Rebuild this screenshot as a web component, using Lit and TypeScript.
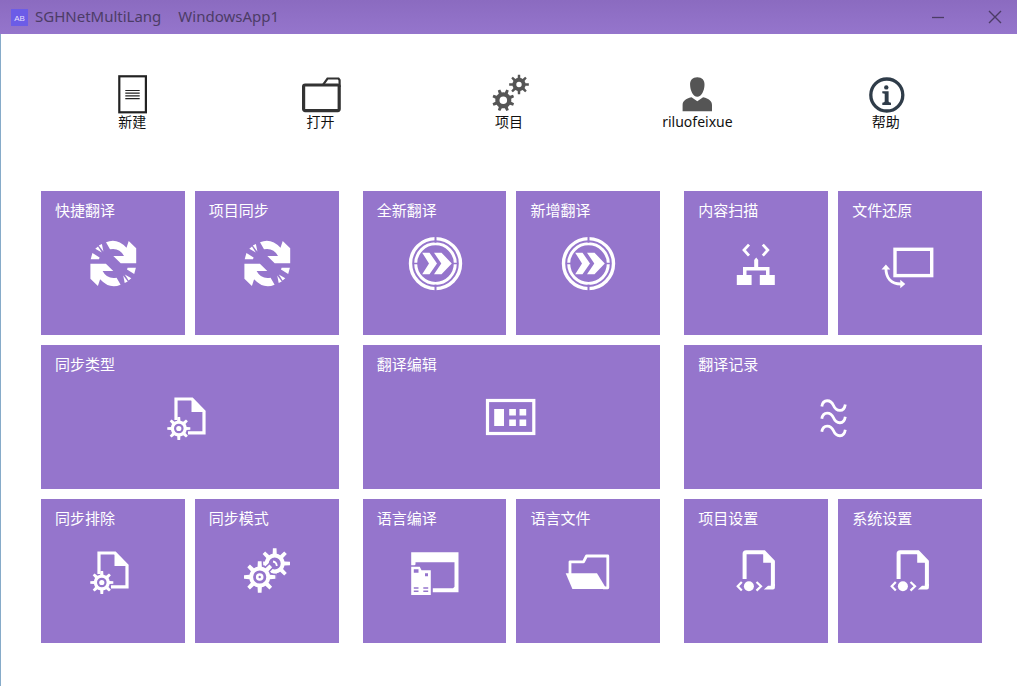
import { LitElement, html, svg, css, type SVGTemplateResult } from "lit";
import { customElement, property } from "lit/decorators.js";
import { classMap } from "lit/directives/class-map.js";

/** Outline of a cog with `n` teeth, centred on (cx, cy). */
function cog(cx: number, cy: number, outer: number, body: number, n = 8, start = 0): string {
  const step = (Math.PI * 2) / n;
  const at = (r: number, a: number) =>
    `${(cx + r * Math.cos(a)).toFixed(2)} ${(cy + r * Math.sin(a)).toFixed(2)}`;
  let d = "";
  for (let i = 0; i < n; i++) {
    const a = start + i * step;
    d += `${i ? "L" : "M"}${at(body, a - step * 0.26)}L${at(outer, a - step * 0.15)}`;
    d += `L${at(outer, a + step * 0.15)}L${at(body, a + step * 0.26)}`;
    d += `A${body} ${body} 0 0 1 ${at(body, a + step * 0.74)}`;
  }
  return d + "Z";
}

/** Circular subpath, used to punch holes with the even-odd rule. */
function ring(cx: number, cy: number, r: number): string {
  return `M${cx - r} ${cy}a${r} ${r} 0 1 0 ${2 * r} 0a${r} ${r} 0 1 0 ${-2 * r} 0Z`;
}

const PURPLE = "#9575cc";

const halfSync = svg`
  <path d="M23 9.3Q34 4.5 43.5 14.8L45.7 8L53.2 15.3V30.3H37.7L30.3 23H41Q36.5 14.5 27 16.3Z"/>
  <path d="M15.8 12.6L18.9 10.9L20.4 18.6ZM12.3 15.8L15 13.4L18.8 19.6ZM9.4 20L16.6 24.4L16 26.2L7.7 26.3Z"/>`;

const tileIcons: Record<string, SVGTemplateResult> = {
  sync: svg`<g fill="#fff">${halfSync}<g transform="rotate(180 30.3 30.5)">${halfSync}</g></g>`,
  forward: svg`
    <g fill="none" stroke="#fff">
      <circle cx="30.5" cy="30.6" r="25" stroke-width="3.4"/>
      <circle cx="30.5" cy="30.6" r="19.8" stroke-width="3"/>
    </g>
    <path fill="${PURPLE}" d="M29.5 3h2v6.8h-2ZM29.5 51.5h2v6.8h-2ZM8 29.8h6v1.5H8ZM47 29.8h6v1.5h-6Z"/>
    <path fill="#fff" d="M17.2 19.7H24.5L32 30.5L24.5 41.3H17.2L24 30.5ZM29 19.7H36.5L46.8 30.5L36.5 41.3H29L36.3 30.5Z"/>`,
  scan: svg`
    <path fill="none" stroke="#fff" stroke-width="2.8" d="M23 11.6L18 17L23 22.6M36.8 11.6L41.8 17L36.8 22.6"/>
    <path fill="#fff" d="M28.2 27L30.2 24.5L32.2 27V34H43.5V42H48.8V52H33.8V42H40V37.4H20.5V42H25.6V52H10.8V42H17V34H28.2Z"/>`,
  restore: svg`
    <rect x="15" y="16.3" width="36.7" height="26.3" fill="none" stroke="#fff" stroke-width="3.4"/>
    <path fill="none" stroke="#fff" stroke-width="2.8" d="M5.9 35C5.9 45 11 51 21 51"/>
    <path fill="#fff" d="M5.9 31.5L10.3 36.5H1.5ZM25.3 51L20.3 46.7V55.3Z"/>`,
  pageCog: svg`
    <path fill="none" stroke="#fff" stroke-width="3.2" d="M16 33V12H32L44 24.5V45.8H28"/>
    <path fill="#fff" d="M31.5 11L45.5 25H31.5Z"/>
    <path fill="#fff" fill-rule="evenodd" d="${cog(18.8, 41.5, 11.6, 8) + ring(18.8, 41.5, 4.8) + ring(18.8, 41.5, 2.6)}"/>`,
  panel: svg`
    <rect x="6.5" y="13.5" width="46.3" height="33" fill="none" stroke="#fff" stroke-width="3.2"/>
    <path fill="#fff" d="M13.2 22h9.8v17h-9.8ZM28.2 22h6.7v6.5h-6.7ZM38.5 22h6.7v6.5h-6.7ZM28.2 32.5h6.7V39h-6.7ZM38.5 32.5h6.7V39h-6.7Z"/>`,
  waves: svg`
    <g fill="none" stroke="#fff" stroke-width="2.8">
      <path d="M18.8 19.5C20 11.5 28 12.5 30.5 18.5S41 26 42.3 17.5"/>
      <path d="M18.8 31.8C20 23.8 28 24.8 30.5 30.8S41 38.3 42.3 29.8"/>
      <path d="M18.8 44.8C20 36.8 28 37.8 30.5 43.8S41 51.3 42.3 42.8"/>
    </g>`,
  cogs: svg`
    <path fill="#fff" fill-rule="evenodd" d="${cog(37.7, 22.5, 15.4, 10) + ring(37.7, 22.5, 6)}"/>
    <path fill="none" stroke="#fff" stroke-width="1.8" d="M36 20.500Q39.5 21 39.8 25"/>
    <path fill="${PURPLE}" stroke="${PURPLE}" stroke-width="3" d="${cog(22.7, 36, 15.8, 10.5)}"/>
    <path fill="#fff" fill-rule="evenodd" d="${cog(22.7, 36, 15.8, 10.5) + ring(22.7, 36, 6.6) + ring(22.7, 36, 3.8) + ring(22.7, 36, 1.2)}"/>`,
  compile: svg`
    <path fill="#fff" d="M6.2 11.3H53.5V51.3H27.8V47.3H48L49.5 45.8V21.3H10.5V23.5L9.5 24.3H6.2Z"/>
    <path fill="#fff" fill-rule="evenodd" d="M6.2 25.7H14.8L16.5 29.3H25.8V54H6.2ZM8.8 28.3V31.7H13.5V28.3ZM20 32.2V35.2H23V32.2ZM8.8 46.3V47.8H13.5V46.3ZM8.8 49.5V51H13.5V49.5ZM18.3 46.3V47.8H23.2V46.3ZM18.3 49.5V51H23.2V49.5Z"/>`,
  folder: svg`
    <path fill="none" stroke="#fff" stroke-width="2.8" stroke-linejoin="round" d="M12 33V20.8H25.5L28.5 15H49.8V46.8H45"/>
    <path fill="#fff" d="M7.7 32.3H39L48.5 48H14.4Z"/>`,
  pageCode: svg`
    <path fill="none" stroke="#fff" stroke-width="4" d="M18.6 38V12.8Q18.6 11.2 20.2 11.2H38L46.9 20.5V45"/>
    <path fill="#fff" d="M37.2 10L48.8 21.8H37.2ZM44.9 43H48.9V46.5Q48.9 48.4 47 48.4H37.8L42 44.8H44.9Z"/>
    <circle cx="22.9" cy="45.3" r="5" fill="#fff"/>
    <path fill="none" stroke="#fff" stroke-width="2.2" d="M15.8 41L11.7 45.3L15.8 49.6M30.5 41L35 45.3L30.5 49.6"/>`,
};

const barIcons: Record<string, SVGTemplateResult> = {
  create: svg`
    <rect x="7.3" y="1.3" width="26.6" height="36" fill="none" stroke="#222" stroke-width="2.2"/>
    <path stroke="#222" stroke-width="1.2" d="M13.3 15.5H27.7M13.3 18.2H27.7M13.3 20.9H27.7M13.3 23.6H27.7"/>`,
  open: svg`
    <rect x="2.6" y="10" width="35.6" height="25.6" rx="1.5" fill="none" stroke="#333" stroke-width="3.2"/>
    <path fill="none" stroke="#333" stroke-width="2.2" d="M22 9.8L26.5 3.500H37.5L38.6 5V12"/>`,
  project: svg`
    <path fill="#555" fill-rule="evenodd" d="${cog(14.3, 25.3, 11.2, 8, 8, 0.39) + ring(14.3, 25.3, 3.8)}"/>
    <path fill="#555" fill-rule="evenodd" d="${cog(30, 9.5, 9.9, 6.6) + ring(30, 9.5, 2.7)}"/>`,
  user: svg`
    <path fill="#555" d="M20.3 2.2C25 2.2 27.8 5 27.5 10C27.4 15.5 24.5 21.7 20.3 21.7S13.2 15.5 13.1 10C12.8 5 15.6 2.2 20.3 2.2Z"/>
    <path fill="#555" d="M14.5 22.2L20.3 26.3L26.1 22.2C32 23.5 35 26 35 30V36.3H5.6V30C5.6 26 8.6 23.5 14.5 22.2Z"/>`,
  help: svg`
    <circle cx="20.8" cy="20" r="16" fill="none" stroke="#2f3c49" stroke-width="3.3"/>
    <circle cx="20.3" cy="12.4" r="2.2" fill="#2f3c49"/>
    <path fill="#2f3c49" d="M16.3 16.3H22.6V26.5Q22.8 27.6 25 27.8V30H16.3V27.8Q18.6 27.6 18.7 26.5V18.7L16.3 18.3Z"/>`,
};

interface Tile {
  label: string;
  icon: string;
  wide?: boolean;
}

const actions = [
  { label: "新建", icon: "create" },
  { label: "打开", icon: "open" },
  { label: "项目", icon: "project" },
  { label: "riluofeixue", icon: "user" },
  { label: "帮助", icon: "help" },
];

const groups: Tile[][] = [
  [
    { label: "快捷翻译", icon: "sync" },
    { label: "项目同步", icon: "sync" },
    { label: "同步类型", icon: "pageCog", wide: true },
    { label: "同步排除", icon: "pageCog" },
    { label: "同步模式", icon: "cogs" },
  ],
  [
    { label: "全新翻译", icon: "forward" },
    { label: "新增翻译", icon: "forward" },
    { label: "翻译编辑", icon: "panel", wide: true },
    { label: "语言编译", icon: "compile" },
    { label: "语言文件", icon: "folder" },
  ],
  [
    { label: "内容扫描", icon: "scan" },
    { label: "文件还原", icon: "restore" },
    { label: "翻译记录", icon: "waves", wide: true },
    { label: "项目设置", icon: "pageCode" },
    { label: "系统设置", icon: "pageCode" },
  ],
];

@customElement("app-titlebar")
export class AppTitlebar extends LitElement {
  @property() product = "";
  @property() document = "";

  static styles = css`
    :host {
      display: flex;
      align-items: center;
      height: 34px;
      padding-left: 11px;
      background: linear-gradient(#8b6bc0, #9575cc);
      color: #4c3c66;
      font-size: 15px;
      line-height: 20px;
    }
    .logo {
      display: block;
      width: 17px;
      height: 17px;
      margin-right: 7px;
    }
    .title {
      padding-bottom: 2px;
    }
    .document {
      flex: 1;
      margin-left: 17px;
    }
    .controls {
      display: flex;
      gap: 13px;
    }
    .control {
      display: grid;
      place-items: center;
      width: 44px;
      height: 34px;
      padding: 0;
      border: 0;
      background: none;
      color: inherit;
    }
  `;

  render() {
    return html`
      <svg class="logo" viewBox="0 0 17 17" aria-hidden="true">
        <rect width="17" height="17" fill="#6c5ce7" />
        <text x="8.5" y="11.5" text-anchor="middle" font-family="Liberation Sans, sans-serif" font-size="8" fill="#e4defc">AB</text>
      </svg>
      <span class="title">${this.product}</span>
      <span class="title document">${this.document}</span>
      <div class="controls">
        <button class="control" aria-label="最小化">
          <svg width="14" height="14" fill="none" stroke="currentColor"><path stroke-width="1.3" d="M1 7.5H13" /></svg>
        </button>
        <button class="control" aria-label="关闭">
          <svg width="14" height="14" fill="none" stroke="currentColor"><path stroke-width="1.4" d="M1 1L13 13M13 1L1 13" /></svg>
        </button>
      </div>
    `;
  }
}

@customElement("app-root")
export class AppRoot extends LitElement {
  static styles = css`
    :host {
      display: block;
      box-sizing: border-box;
      min-height: 100vh;
      background: #fff;
      font-family: "Noto Sans", "Noto Sans CJK SC", sans-serif;
      font-size: 15px;
      box-shadow: inset 1px 0 #86abc9;
    }
    .toolbar {
      display: grid;
      grid-template-columns: repeat(5, 1fr);
      padding: 41px 37px 0 38px;
    }
    .action {
      display: flex;
      flex-direction: column;
      align-items: center;
      padding: 0;
      border: 0;
      background: none;
      font: inherit;
      font-size: 14px;
      line-height: 14px;
      color: #111;
    }
    .action-icon {
      display: block;
      width: 40px;
      height: 40px;
      overflow: visible;
    }
    .board {
      display: grid;
      grid-template-columns: repeat(3, 1fr);
      gap: 24px;
      padding: 62px 35px 43px 41px;
    }
    .group {
      display: grid;
      grid-template-columns: repeat(2, 1fr);
      grid-auto-rows: 144px;
      gap: 10px;
    }
    .tile {
      display: grid;
      padding: 9px 14px;
      border: 0;
      background: #9575cc;
      color: #fff;
      font: inherit;
      line-height: 20px;
      text-align: left;
    }
    .wide {
      grid-column: span 2;
    }
    .tile-label,
    .tile-icon {
      grid-area: 1 / 1;
    }
    .tile-label {
      align-self: start;
    }
    .tile-icon {
      place-self: center;
      width: 60px;
      height: 60px;
    }
  `;

  render() {
    return html`
      <app-titlebar product="SGHNetMultiLang" document="WindowsApp1"></app-titlebar>
      <nav class="toolbar">
        ${actions.map(
          (a) => html`<button class="action">
            <svg class="action-icon" viewBox="0 0 40 40" aria-hidden="true">${barIcons[a.icon]}</svg>
            <span>${a.label}</span>
          </button>`
        )}
      </nav>
      <main class="board">
        ${groups.map(
          (g) => html`<section class="group">
            ${g.map(
              (t) => html`<button class=${classMap({ tile: true, wide: !!t.wide })}>
                <span class="tile-label">${t.label}</span>
                <svg class="tile-icon" viewBox="0 0 60 60" aria-hidden="true">${tileIcons[t.icon]}</svg>
              </button>`
            )}
          </section>`
        )}
      </main>
    `;
  }
}
